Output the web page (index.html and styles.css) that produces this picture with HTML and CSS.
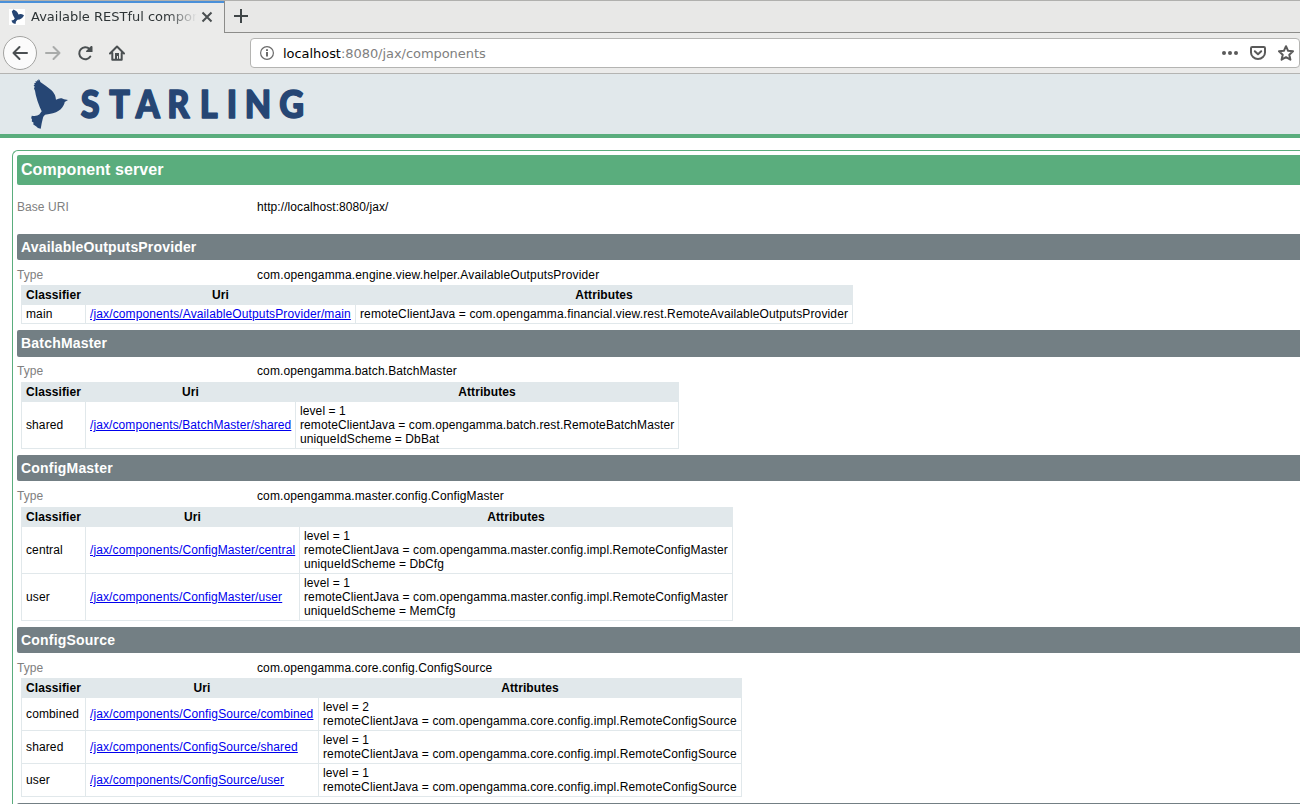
FILE: index.html
```html
<!DOCTYPE html>
<html lang="en">
<head>
<meta charset="utf-8">
<title>Available RESTful components</title>
<link rel="stylesheet" href="styles.css">
</head>
<body>
<svg class="defs" width="0" height="0" aria-hidden="true">
  <symbol id="bird" viewBox="0 0 37 50">
    <path d="M7.700 0L9 1.700L9.300 3L15 7L20.500 11.200Q24.500 15 25 20.700Q28 18.800 30.700 19.200L33 20.300L37 21L33.700 23Q33.500 26 29.700 30.300Q26 33.800 18.300 35L14 35.700Q11.800 37.500 11.700 40L10.700 44.300L9.700 49.700L7 49L5 47.300L2.300 45.500L2.500 43.500L.8 42.500L1 40.500L.2 39L.8 36.700Q6 37.500 8.300 35.500L10.700 32.300Q8.500 28 6.500 22Q4.500 16 4 11.700L3 9.500L3.700 7.700L2.600 6.200L3.800 5.500L3.200 4L4.800 4L4.500 2L6.200 2.500L6 1L7.300 1.800Z"/>
  </symbol>
</svg>
<div class="tabs">
  <div class="tab">
    <span class="favicon"><svg width="13" height="15" viewBox="0 0 13 15"><path d="M2.500.5Q6.500 2 7.500 5.500Q9.500 4 13 6.200Q11 10.500 6.500 10.800Q4.500 12 4.500 15Q1 14.500 .5 11.500Q3 11.500 3.800 9.500Q1.500 6 .8 2.500Z"/></svg></span>
    <span class="tab-title">Available RESTful components</span>
    <svg class="close" width="12" height="12" viewBox="0 0 12 12"><path d="M1.500 1.500l9 9M10.500 1.500l-9 9"/></svg>
  </div>
  <div class="tab-rest">
    <svg class="plus" width="14" height="14" viewBox="0 0 14 14"><path d="M7 0v14M0 7h14"/></svg>
  </div>
</div>
<div class="toolbar">
  <span class="back"><svg width="16" height="16" viewBox="0 0 16 16"><path d="M15 8H1.500M7.500 2L1.500 8l6 6"/></svg></span>
  <svg class="tool forward" width="16" height="16" viewBox="0 0 16 16"><path d="M1 8h13.500M8.500 2l6 6l-6 6"/></svg>
  <svg class="tool reload" width="16" height="16" viewBox="0 0 16 16"><path d="M13.300 11.500A6 6 0 1 1 12.500 4"/><path class="solid" d="M14 1Q15.500 .5 15.500 2V7H9.500Q8.500 6.500 9.300 5.700z"/></svg>
  <svg class="tool home" width="16" height="16" viewBox="0 0 16 16"><path d="M1 8.500L8 1.500l7 7M3.300 8v6.700h9.400V8"/><path class="solid" d="M6 8h4v6H9v-3H8v3H6z"/></svg>
  <div class="urlbar">
    <svg class="info" width="14" height="14" viewBox="0 0 14 14"><circle cx="7" cy="7" r="6.400"/><path class="stem" d="M7 6v4.500M7 3.200v1.800"/></svg>
    <span class="url"><b>localhost</b>:8080/jax/components</span>
    <svg class="dots" width="16" height="16" viewBox="0 0 16 16"><circle cx="2" cy="8" r="2"/><circle cx="8" cy="8" r="2"/><circle cx="14" cy="8" r="2"/></svg>
    <svg class="act" width="16" height="16" viewBox="0 0 16 16"><path d="M2.200 2h11.600q1.200 0 1.200 1.200V7.500a7 6.500 0 0 1-14 0V3.200Q1 2 2.200 2zM4.800 6.200L8 9.300l3.200-3.100"/></svg>
    <svg class="act" width="16" height="16" viewBox="0 0 16 16"><path d="M8 1.200l2.100 4.600 4.900.5-3.700 3.400 1.100 5L8 12.200l-4.400 2.500 1.100-5L1 6.300l4.900-.5z"/></svg>
  </div>
</div>
<header class="brand">
  <svg class="logo-bird" width="37" height="50"><use href="#bird"/></svg>
  <svg class="wordmark" width="230" height="50"><text transform="scale(.9 1)" y="40.300" x="0.800 32.400 61.900 96.900 133 163 183 221.300">STARLING</text></svg>
</header>
<main class="panel">
  <h1>Component server</h1>
  <dl class="row base"><dt>Base URI</dt><dd>http://localhost:8080/jax/</dd></dl>

  <section class="outputs">
    <h2>AvailableOutputsProvider</h2>
    <dl class="row"><dt>Type</dt><dd>com.opengamma.engine.view.helper.AvailableOutputsProvider</dd></dl>
    <table>
      <tr><th class="c1">Classifier</th><th class="c2">Uri</th><th>Attributes</th></tr>
      <tr><td>main</td><td><a href="#">/jax/components/AvailableOutputsProvider/main</a></td><td>remoteClientJava = com.opengamma.financial.view.rest.RemoteAvailableOutputsProvider</td></tr>
    </table>
  </section>

  <section class="batch">
    <h2>BatchMaster</h2>
    <dl class="row"><dt>Type</dt><dd>com.opengamma.batch.BatchMaster</dd></dl>
    <table>
      <tr><th class="c1">Classifier</th><th class="c2">Uri</th><th>Attributes</th></tr>
      <tr><td>shared</td><td><a href="#">/jax/components/BatchMaster/shared</a></td><td>level = 1<br>remoteClientJava = com.opengamma.batch.rest.RemoteBatchMaster<br>uniqueIdScheme = DbBat</td></tr>
    </table>
  </section>

  <section class="cmaster">
    <h2>ConfigMaster</h2>
    <dl class="row"><dt>Type</dt><dd>com.opengamma.master.config.ConfigMaster</dd></dl>
    <table>
      <tr><th class="c1">Classifier</th><th class="c2">Uri</th><th>Attributes</th></tr>
      <tr><td>central</td><td><a href="#">/jax/components/ConfigMaster/central</a></td><td>level = 1<br>remoteClientJava = com.opengamma.master.config.impl.RemoteConfigMaster<br>uniqueIdScheme = DbCfg</td></tr>
      <tr><td>user</td><td><a href="#">/jax/components/ConfigMaster/user</a></td><td>level = 1<br>remoteClientJava = com.opengamma.master.config.impl.RemoteConfigMaster<br>uniqueIdScheme = MemCfg</td></tr>
    </table>
  </section>

  <section class="csource">
    <h2>ConfigSource</h2>
    <dl class="row"><dt>Type</dt><dd>com.opengamma.core.config.ConfigSource</dd></dl>
    <table>
      <tr><th class="c1">Classifier</th><th class="c2">Uri</th><th>Attributes</th></tr>
      <tr><td>combined</td><td><a href="#">/jax/components/ConfigSource/combined</a></td><td>level = 2<br>remoteClientJava = com.opengamma.core.config.impl.RemoteConfigSource</td></tr>
      <tr><td>shared</td><td><a href="#">/jax/components/ConfigSource/shared</a></td><td>level = 1<br>remoteClientJava = com.opengamma.core.config.impl.RemoteConfigSource</td></tr>
      <tr><td>user</td><td><a href="#">/jax/components/ConfigSource/user</a></td><td>level = 1<br>remoteClientJava = com.opengamma.core.config.impl.RemoteConfigSource</td></tr>
    </table>
  </section>

  <h2 class="next"></h2>
</main>
</body>
</html>
```

FILE: styles.css
```css
* { box-sizing: border-box; }
html, body { height: 804px; overflow: hidden; }
body {
  margin: 0;
  display: flex;
  flex-direction: column;
  background: #fff;
  color: #000;
  font: 12px/14px "Liberation Sans", Arial, sans-serif;
}
svg { display: block; flex: none; fill: none; }
.defs { position: absolute; }

/* Browser tabs */
.tabs { display: flex; flex: none; height: 33px; background: #ebebea; border-top: 1px solid #b0b0ae; }
.tab {
  display: flex;
  align-items: center;
  flex: none;
  width: 224px;
  border-top: 2px solid #4a90d9;
  padding: 0 11px 3px 9px;
  font: 13px/18px "DejaVu Sans", sans-serif;
  color: #2e3436;
}
.favicon { width: 16px; height: 16px; margin-right: 6px; padding-left: 2px; background: #fff; }
.tab-title {
  width: 166px;
  overflow: hidden;
  white-space: nowrap;
  -webkit-mask-image: linear-gradient(to right, #000 136px, transparent 166px);
  mask-image: linear-gradient(to right, #000 136px, transparent 166px);
}
.close { margin-left: 4px; stroke: #4a4f51; stroke-width: 2; }
.tab-rest { flex: 1; background: #e8e8e7; border-left: 1px solid #8c8c8a; border-bottom: 1px solid #8c8c8a; padding: 8px 9px; }
.plus { stroke: #3f4547; stroke-width: 2; }

/* Navigation toolbar */
.toolbar {
  display: flex;
  align-items: center;
  flex: none;
  height: 41px;
  padding-left: 3px;
  background: #ebebea;
  border-bottom: 1px solid #b4b4b2;
}
.back {
  display: grid;
  place-items: center;
  width: 34px;
  height: 34px;
  border: 1px solid #a3a3a1;
  border-radius: 50%;
  background: #fbfbfb;
}
.back svg, .tool { stroke: #4a4f51; stroke-width: 2; stroke-linecap: round; stroke-linejoin: round; }
.tool { margin-left: 16px; }
.forward { margin-left: 8px; stroke: #a9abaa; }
.solid { fill: #4a4f51; stroke: none; }
.urlbar {
  display: flex;
  align-items: center;
  flex: 1;
  height: 30px;
  margin-left: 125px;
  padding: 0 5px 0 9px;
  border: 1px solid #b4b4b2;
  border-radius: 4px;
  background: #fff;
  font: 13px/18px "DejaVu Sans", sans-serif;
  letter-spacing: -0.050px;
  color: #808080;
}
.info { stroke: #6b6b6b; stroke-width: 1.200; }
.stem { stroke-width: 2; }
.url { flex: 1; margin-left: 9px; padding-top: 2px; }
.url b { font-weight: normal; color: #000; }
.dots { fill: #5a5a5a; margin-right: 12px; }
.act { stroke: #5a5a5a; stroke-width: 2; stroke-linejoin: round; stroke-linecap: round; }
.act + .act { margin-left: 12px; }

/* Brand header */
.brand { display: flex; flex: none; height: 64px; padding: 5px 0 0 31px; background: #e1e8eb; border-bottom: 4px solid #5aad7d; }
#bird, .logo-bird, .favicon svg { fill: #264674; }
.wordmark { margin-left: 12px; margin-top: -1px; font: 900 38px Lato, sans-serif; fill: #264674; stroke: #264674; stroke-width: 1.600; stroke-linejoin: round; }

/* Component listing */
.panel {
  flex: 1;
  min-height: 0;
  overflow: hidden;
  margin: 12px 0 0 12px;
  padding: 4px 0 0 4px;
  border: solid #5aad7d;
  border-width: 1px 0 0 1px;
  border-radius: 6px 0 0 0;
}
h1, h2 { margin: 0; padding-left: 4px; border-radius: 2px 0 0 2px; color: #fff; }
h1 { height: 30px; background: #5aad7d; font-size: 16px; line-height: 30px; letter-spacing: 0.070px; }
h2 { height: 26.200px; background: #737f84; font-size: 14px; line-height: 26px; letter-spacing: 0.200px; }
.outputs h2 { letter-spacing: 0.170px; }
.next { height: 6px; }
.row { display: flex; height: 14px; margin: 7.800px 0 3.600px; }
.row.base { margin: 15px 0 19.800px; }
dt { width: 240px; color: #808080; letter-spacing: 0.060px; }
dd { margin: 0; letter-spacing: 0.120px; }
.outputs dd { letter-spacing: 0.158px; }
.base dd { letter-spacing: 0.080px; }
section { padding-bottom: 6px; }
table { table-layout: fixed; border-collapse: collapse; margin-left: 4px; font: inherit; }
th, td { padding: 2px 4px; border: 1px solid #e1e8eb; white-space: nowrap; letter-spacing: 0.125px; }
th { background: #e1e8eb; letter-spacing: 0.080px; }
.c1 { width: 64px; }
.outputs table { width: 832px; }
.outputs .c2 { width: 270px; }
.batch table { width: 658px; }
.batch .c2 { width: 210px; }
.batch td { letter-spacing: 0.095px; }
.cmaster table { width: 712px; }
.cmaster .c2 { width: 214px; }
.cmaster td { letter-spacing: 0.105px; }
.csource table { width: 721px; }
.csource .c2 { width: 233px; }
a { color: #0000ee; }
```
